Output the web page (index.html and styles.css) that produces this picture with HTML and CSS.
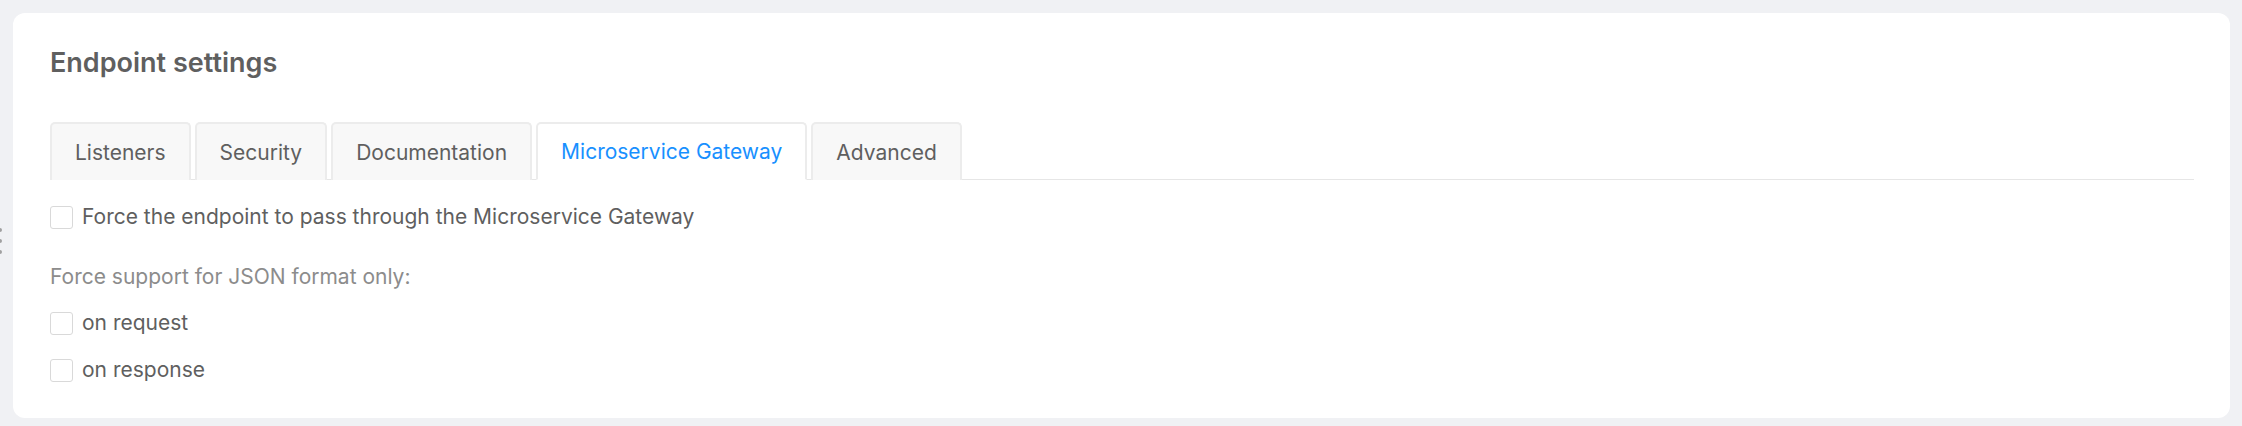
FILE: index.html
```html
<!DOCTYPE html>
<html>
<head>
<meta charset="utf-8">
<link rel="stylesheet" href="styles.css">
</head>
<body>
<div class="handle"><span></span><span></span><span></span></div>
<div class="card">
  <h2 class="title">Endpoint settings</h2>
  <div class="tabs">
    <div class="tab">Listeners</div>
    <div class="tab">Security</div>
    <div class="tab">Documentation</div>
    <div class="tab active">Microservice Gateway</div>
    <div class="tab">Advanced</div>
  </div>
  <div class="pane">
    <label class="check"><span class="box"></span><span>Force the endpoint to pass through the Microservice Gateway</span></label>
    <div class="label">Force support for JSON format only:</div>
    <label class="check"><span class="box"></span><span>on request</span></label>
    <label class="check"><span class="box"></span><span>on response</span></label>
  </div>
</div>
</body>
</html>
```
FILE: styles.css
```css
* { box-sizing: border-box; }
html, body { margin: 0; padding: 0; }
body {
  background: #f0f1f4;
  font-family: Inter, "Noto Sans", sans-serif;
  color: #5f5f5f;
  padding: 13px 12px 8px 13px;
  position: relative;
}
.handle {
  position: absolute;
  left: -2px;
  top: 228px;
  display: flex;
  flex-direction: column;
  gap: 7px;
}
.handle span {
  width: 4px;
  height: 4px;
  border-radius: 50%;
  background: #a0a0a0;
}
.card {
  background: #fff;
  border-radius: 12px;
  padding: 30px 36px 0 37px;
  height: 405px;
}
.title {
  margin: 0;
  font-size: 27px;
  font-weight: 600;
  line-height: 40px;
  color: #5f5f5f;
}
.tabs {
  margin-top: 39px;
  display: flex;
  gap: 4px;
  border-bottom: 1px solid #e6e6e6;
}
.tab {
  height: 58px;
  padding: 0 23px;
  display: flex;
  align-items: center;
  font-size: 21px;
  color: #5f5f5f;
  background: #f8f8f8;
  border: 2px solid #ececec;
  border-bottom: none;
  border-radius: 5px 5px 0 0;
  margin-bottom: -1px;
}
.tab.active {
  background: #fff;
  color: #1890ff;
  border-bottom: 1px solid #fff;
}
.pane {
  padding-top: 25px;
  display: flex;
  flex-direction: column;
}
.check {
  display: flex;
  align-items: center;
  gap: 9px;
  font-size: 21px;
  line-height: 24px;
  color: #5f5f5f;
}
.box {
  width: 23px;
  height: 23px;
  border: 1px solid #d9d9d9;
  border-radius: 3px;
  background: #fff;
}
.label {
  margin-top: 36px;
  margin-bottom: 22px;
  font-size: 21px;
  line-height: 24px;
  color: #8c8c8c;
}
.check + .check { margin-top: 23px; }
```
